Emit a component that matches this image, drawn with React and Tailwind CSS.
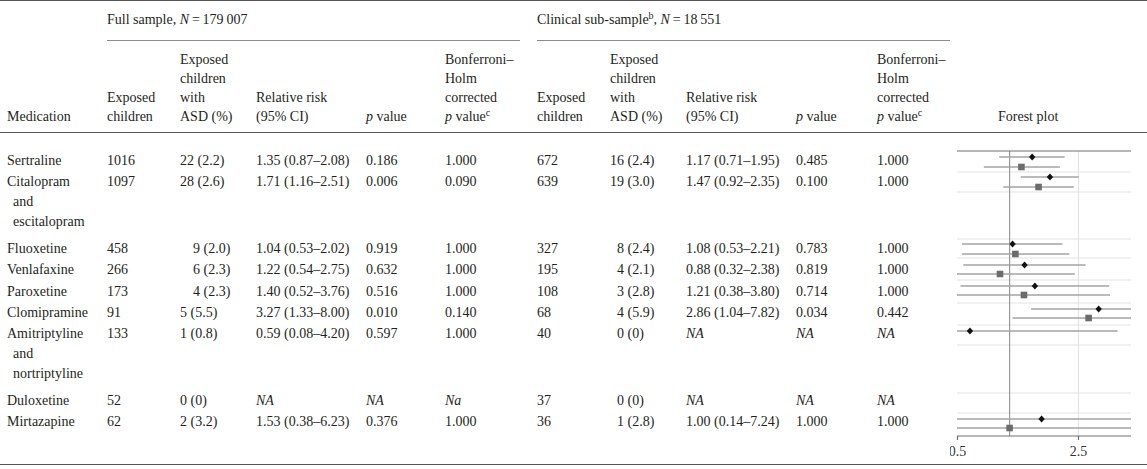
import React from 'react';

const rows = [
  { med: ['Sertraline'], n: '1016', asd: '22 (2.2)', ap: '', rr: '1.35 (0.87–2.08)', p: '0.186', bh: '1.000', cn: '672', casd: '16 (2.4)', cap: '', crr: '1.17 (0.71–1.95)', cp: '0.485', cbh: '1.000' },
  { med: ['Citalopram', 'and', 'escitalopram'], n: '1097', asd: '28 (2.6)', ap: '', rr: '1.71 (1.16–2.51)', p: '0.006', bh: '0.090', cn: '639', casd: '19 (3.0)', cap: '', crr: '1.47 (0.92–2.35)', cp: '0.100', cbh: '1.000' },
  { med: ['Fluoxetine'], n: '458', asd: '9 (2.0)', ap: 'pl-[13px]', rr: '1.04 (0.53–2.02)', p: '0.919', bh: '1.000', cn: '327', casd: '8 (2.4)', cap: 'pl-[7px]', crr: '1.08 (0.53–2.21)', cp: '0.783', cbh: '1.000' },
  { med: ['Venlafaxine'], n: '266', asd: '6 (2.3)', ap: 'pl-[13px]', rr: '1.22 (0.54–2.75)', p: '0.632', bh: '1.000', cn: '195', casd: '4 (2.1)', cap: 'pl-[7px]', crr: '0.88 (0.32–2.38)', cp: '0.819', cbh: '1.000' },
  { med: ['Paroxetine'], n: '173', asd: '4 (2.3)', ap: 'pl-[13px]', rr: '1.40 (0.52–3.76)', p: '0.516', bh: '1.000', cn: '108', casd: '3 (2.8)', cap: 'pl-[7px]', crr: '1.21 (0.38–3.80)', cp: '0.714', cbh: '1.000' },
  { med: ['Clomipramine'], n: '91', asd: '5 (5.5)', ap: '', rr: '3.27 (1.33–8.00)', p: '0.010', bh: '0.140', cn: '68', casd: '4 (5.9)', cap: 'pl-[7px]', crr: '2.86 (1.04–7.82)', cp: '0.034', cbh: '0.442' },
  { med: ['Amitriptyline', 'and', 'nortriptyline'], n: '133', asd: '1 (0.8)', ap: '', rr: '0.59 (0.08–4.20)', p: '0.597', bh: '1.000', cn: '40', casd: '0 (0)', cap: 'pl-[7px]', crr: 'NA', cp: 'NA', cbh: 'NA' },
  { med: ['Duloxetine'], n: '52', asd: '0 (0)', ap: '', rr: 'NA', p: 'NA', bh: 'Na', cn: '37', casd: '0 (0)', cap: 'pl-[7px]', crr: 'NA', cp: 'NA', cbh: 'NA' },
  { med: ['Mirtazapine'], n: '62', asd: '2 (3.2)', ap: '', rr: '1.53 (0.38–6.23)', p: '0.376', bh: '1.000', cn: '36', casd: '1 (2.8)', cap: 'pl-[7px]', crr: '1.00 (0.14–7.24)', cp: '1.000', cbh: '1.000' },
];

const V = ({ t }) => (t === 'NA' || t === 'Na' ? <i>{t}</i> : <>{t}</>);

const X = (v) => 7.5 + (Math.log(v) + Math.LN2) * 75.18;
const clip = (x) => Math.max(7, Math.min(181, x));

const marks = [
  { y: 24, v: 1.35, lo: 0.87, hi: 2.08, d: true },
  { y: 34, v: 1.17, lo: 0.71, hi: 1.95 },
  { y: 44, v: 1.71, lo: 1.16, hi: 2.51, d: true },
  { y: 54, v: 1.47, lo: 0.92, hi: 2.35 },
  { y: 111, v: 1.04, lo: 0.53, hi: 2.02, d: true },
  { y: 121, v: 1.08, lo: 0.53, hi: 2.21 },
  { y: 132, v: 1.22, lo: 0.54, hi: 2.75, d: true },
  { y: 141, v: 0.88, lo: 0.32, hi: 2.38 },
  { y: 153, v: 1.4, lo: 0.52, hi: 3.76, d: true },
  { y: 162, v: 1.21, lo: 0.38, hi: 3.8 },
  { y: 176, v: 3.27, lo: 1.33, hi: 8.0, d: true },
  { y: 185, v: 2.86, lo: 1.04, hi: 7.82 },
  { y: 198, v: 0.59, lo: 0.08, hi: 4.2, d: true },
  { y: 286, v: 1.53, lo: 0.38, hi: 6.23, d: true },
  { y: 295, v: 1.0, lo: 0.14, hi: 7.24 },
];

const grid = [39, 59, 106, 125, 147, 170, 192, 212, 260, 280];

function Forest() {
  const x1 = X(1);
  const x25 = X(2.5);
  return (
    <svg width="197" height="331" viewBox="0 0 197 331" className="block">
      {grid.map((y) => (
        <line key={y} x1="7" x2="181" y1={y} y2={y} stroke="#e3e3e3" strokeWidth="1.2" />
      ))}
      <line x1={x25} x2={x25} y1="18" y2="303" stroke="#e3e3e3" strokeWidth="1.2" />
      <line x1={x1} x2={x1} y1="18" y2="303" stroke="#9a9a9a" strokeWidth="1.2" />
      <line x1="7" x2="181" y1="18" y2="18" stroke="#6f6f6f" strokeWidth="1.2" />
      {marks.map((m, i) => {
        const cx = X(m.v);
        return (
          <g key={i}>
            <line x1={clip(X(m.lo))} x2={clip(X(m.hi))} y1={m.y} y2={m.y} stroke="#a3a3a3" strokeWidth="1.4" />
            {m.d ? (
              <polygon
                points={`${cx},${m.y - 3.6} ${cx + 3.2},${m.y} ${cx},${m.y + 3.6} ${cx - 3.2},${m.y}`}
                fill="#111"
              />
            ) : (
              <rect x={cx - 3.3} y={m.y - 3.3} width="6.6" height="6.6" fill="#6c6c6c" />
            )}
          </g>
        );
      })}
      <line x1="7" x2="181" y1="303" y2="303" stroke="#6f6f6f" strokeWidth="1.2" />
      <line x1="7.5" x2="7.5" y1="303" y2="307" stroke="#6f6f6f" strokeWidth="1.2" />
      <line x1={x25} x2={x25} y1="303" y2="307" stroke="#6f6f6f" strokeWidth="1.2" />
      <text x="7.5" y="323" textAnchor="middle" fontSize="14" fill="#333" fontFamily="'Liberation Serif', serif">0.5</text>
      <text x={x25} y="323" textAnchor="middle" fontSize="14" fill="#333" fontFamily="'Liberation Serif', serif">2.5</text>
    </svg>
  );
}

function PV() {
  return (
    <>
      <i>p</i> value
    </>
  );
}

function Bonf() {
  return (
    <>
      Bonferroni–
      <br />
      Holm
      <br />
      corrected
      <br />
      <i>p</i> value<sup className="text-[10px]">c</sup>
    </>
  );
}

export default function App() {
  return (
    <div className="w-[1147px] h-[469px] bg-white text-[#231f20] text-[14px] [font-family:'Liberation_Serif','Times_New_Roman',serif] border-t border-[#555]">
      {/* group header */}
      <div className="grid grid-cols-[107px_430px_413px_197px] pt-[9px]">
        <div />
        <div className="pr-[17px]">
          <div className="leading-[20px] pb-[10px] border-b border-[#8c8c8c] whitespace-nowrap">
            Full sample, <i>N</i>&#8201;=&#8201;179&#8201;007
          </div>
        </div>
        <div>
          <div className="leading-[20px] pb-[10px] border-b border-[#8c8c8c] whitespace-nowrap">
            Clinical sub-sample<sup className="text-[10px]">b</sup>, <i>N</i>&#8201;=&#8201;18&#8201;551
          </div>
        </div>
        <div />
      </div>

      {/* column header */}
      <div className="grid grid-cols-[100px_73px_76px_110px_79px_92px_73px_76px_110px_81px_73px_197px] items-end pl-[7px] pt-[9px] pb-[6px] leading-[19px] border-b border-[#555] whitespace-nowrap">
        <div>Medication</div>
        <div>Exposed<br />children</div>
        <div>Exposed<br />children<br />with<br />ASD (%)</div>
        <div>Relative risk<br />(95% CI)</div>
        <div><PV /></div>
        <div><Bonf /></div>
        <div>Exposed<br />children</div>
        <div>Exposed<br />children<br />with<br />ASD (%)</div>
        <div>Relative risk<br />(95% CI)</div>
        <div><PV /></div>
        <div><Bonf /></div>
        <div className="pl-[48px]">Forest plot</div>
      </div>

      {/* body */}
      <div className="flex border-b border-[#555]">
        <div className="grid grid-cols-[100px_73px_76px_110px_79px_92px_73px_76px_110px_81px_73px] content-start pl-[7px] pt-[17px] pb-[31px] w-[950px] whitespace-nowrap">
          {rows.map((r, i) => {
            const multi = r.med.length > 1;
            const lh = multi ? 'leading-[20px]' : 'h-[21.5px] leading-[21.5px]';
            return (
              <React.Fragment key={i}>
                <div className={multi ? 'leading-[20px] pb-[6px]' : lh}>
                  {r.med.map((m, j) => (
                    <div key={j} className={j > 0 ? 'pl-[6px]' : ''}>{m}</div>
                  ))}
                </div>
                <div className={lh}>{r.n}</div>
                <div className={`${lh} ${r.ap}`}>{r.asd}</div>
                <div className={lh}><V t={r.rr} /></div>
                <div className={lh}><V t={r.p} /></div>
                <div className={lh}><V t={r.bh} /></div>
                <div className={lh}>{r.cn}</div>
                <div className={`${lh} ${r.cap}`}>{r.casd}</div>
                <div className={lh}><V t={r.crr} /></div>
                <div className={lh}><V t={r.cp} /></div>
                <div className={lh}><V t={r.cbh} /></div>
              </React.Fragment>
            );
          })}
        </div>
        <div className="w-[197px]">
          <Forest />
        </div>
      </div>
    </div>
  );
}
